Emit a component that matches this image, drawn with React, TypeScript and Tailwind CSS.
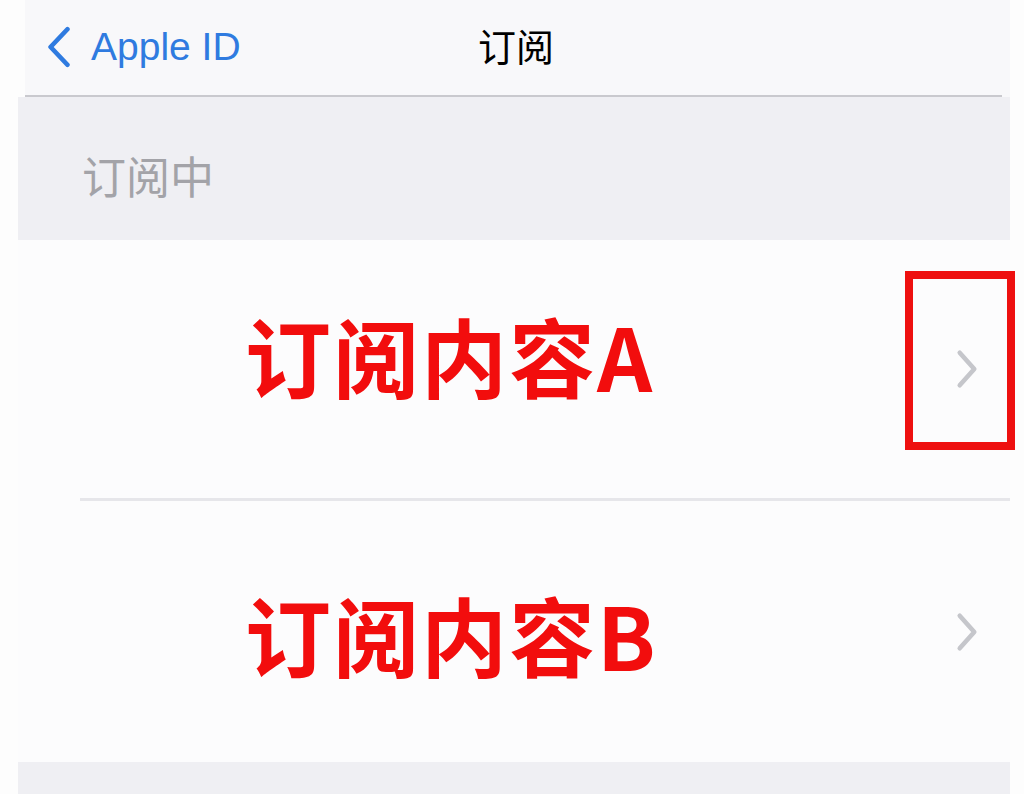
import React from "react";

const Chevron = ({ className }: { className?: string }) => (
  <svg viewBox="0 0 28 44" className={className} fill="none">
    <path d="M6 4 L22 22 L6 40" stroke="currentColor" strokeWidth="5" strokeLinecap="round" strokeLinejoin="round" />
  </svg>
);

const BackChevron = () => (
  <svg viewBox="0 0 30 44" className="w-[28px] h-[42px] text-[#2f7be0]" fill="none">
    <path d="M24 3 L6 22 L24 41" stroke="currentColor" strokeWidth="5" strokeLinecap="round" strokeLinejoin="round" />
  </svg>
);

const Row = ({
  label,
  boxed,
  divider,
  raise,
}: {
  label: string;
  boxed?: boolean;
  divider?: boolean;
  raise?: boolean;
}) => (
  <div className="relative flex flex-col h-[261px] bg-[#fcfcfd]">
    <div className="flex-1 flex items-center">
      <span
        className={
          "ml-[227px] text-[86px] leading-none font-semibold tracking-[2px] text-[#f20d0d] " +
          (raise ? "mb-[28px]" : "mt-[4px]")
        }
        style={{ fontFamily: '"Noto Sans CJK SC", "Noto Sans", sans-serif' }}
      >
        {label}
      </span>
      <Chevron className="ml-auto mr-[30px] w-[26px] h-[40px] text-[#c5c6cb]" />
    </div>
    {divider && <div className="ml-[62px] h-[3px] bg-[#e6e6ea]" />}
    {boxed && (
      <div className="absolute left-[887px] top-[31px] w-[110px] h-[179px] border-[8px] border-[#ee1010]" />
    )}
  </div>
);

export default function App() {
  return (
    <div
      className="w-[1024px] h-[794px] bg-[#fdfdfd] overflow-hidden"
      style={{ fontFamily: '"Noto Sans", "Noto Sans CJK SC", sans-serif' }}
    >
      <div className="ml-[18px] mr-[14px] flex flex-col">
        {/* navigation bar */}
        <div className="relative h-[97px] bg-[#f8f8fa] ml-[7px] flex items-center">
          <div className="flex items-center ml-[20px] mt-[-4px] gap-[18px]">
            <BackChevron />
            <span
              className="text-[39px] leading-none text-[#2f7be0]"
              style={{ fontFamily: '"Liberation Sans", "Noto Sans", sans-serif' }}
            >
              Apple ID
            </span>
          </div>
          <span
            className="absolute left-[453px] top-[26px] text-[38px] leading-none text-black"
            style={{ fontFamily: '"Noto Sans CJK SC", sans-serif' }}
          >
            订阅
          </span>
          <div className="absolute left-0 right-[8px] bottom-0 h-[2px] bg-[#c9c9ce]" />
        </div>
        {/* section header */}
        <div className="h-[143px] bg-[#efeff3] flex items-center">
          <span
            className="ml-[64px] mt-[12px] text-[44px] leading-none text-[#a3a3a8]"
            style={{ fontFamily: '"Noto Sans CJK SC", sans-serif' }}
          >
            订阅中
          </span>
        </div>
        <Row label="订阅内容A" boxed divider raise />
        <Row label="订阅内容B" />
        <div className="h-[40px] bg-[#efeff3]" />
      </div>
    </div>
  );
}
